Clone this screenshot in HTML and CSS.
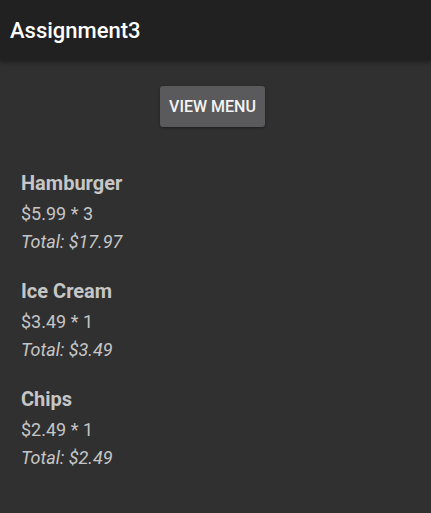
FILE: index.html
```html
<!DOCTYPE html>
<html>
<head>
<meta charset="utf-8">
<link rel="stylesheet" href="styles.css">
</head>
<body>
<header class="toolbar"><span class="title">Assignment3</span></header>
<main class="content">
  <div class="actions"><button class="btn">VIEW MENU</button></div>
  <ul class="items">
    <li class="item">
      <div class="name">Hamburger</div>
      <div class="price">$5.99 * 3</div>
      <div class="total">Total: $17.97</div>
    </li>
    <li class="item">
      <div class="name">Ice Cream</div>
      <div class="price">$3.49 * 1</div>
      <div class="total">Total: $3.49</div>
    </li>
    <li class="item">
      <div class="name">Chips</div>
      <div class="price">$2.49 * 1</div>
      <div class="total">Total: $2.49</div>
    </li>
  </ul>
</main>
</body>
</html>
```
FILE: styles.css
```css
html, body {
  margin: 0;
  padding: 0;
  height: 100%;
  background: #303030;
  font-family: Roboto, "Noto Sans", sans-serif;
}
.toolbar {
  height: 61px;
  background: #212121;
  display: flex;
  align-items: center;
  padding-left: 10px;
  box-shadow: 0 2px 4px rgba(0,0,0,0.3);
}
.title {
  color: #ffffff;
  font-size: 22px;
  font-weight: 500;
}
.content {
  padding-top: 25px;
}
.actions {
  display: flex;
  justify-content: center;
  padding-right: 6px;
}
.btn {
  background: #5a5a5c;
  color: #f4f4f4;
  border: none;
  border-radius: 3px;
  font-family: Roboto, sans-serif;
  font-size: 16px;
  font-weight: 500;
  height: 41px;
  width: 105px;
  padding: 0;
  box-shadow: 0 1px 3px rgba(0,0,0,0.4);
}
.items {
  list-style: none;
  margin: 0;
  padding: 40px 0 0 21px;
}
.item {
  margin-bottom: 19px;
}
.name {
  color: #c6c6c6;
  font-size: 20px;
  font-weight: 700;
  line-height: 33px;
}
.price {
  color: #c6c6c6;
  font-size: 18px;
  line-height: 28px;
}
.total {
  color: #c6c6c6;
  font-size: 18px;
  font-style: italic;
  line-height: 28px;
}
```
